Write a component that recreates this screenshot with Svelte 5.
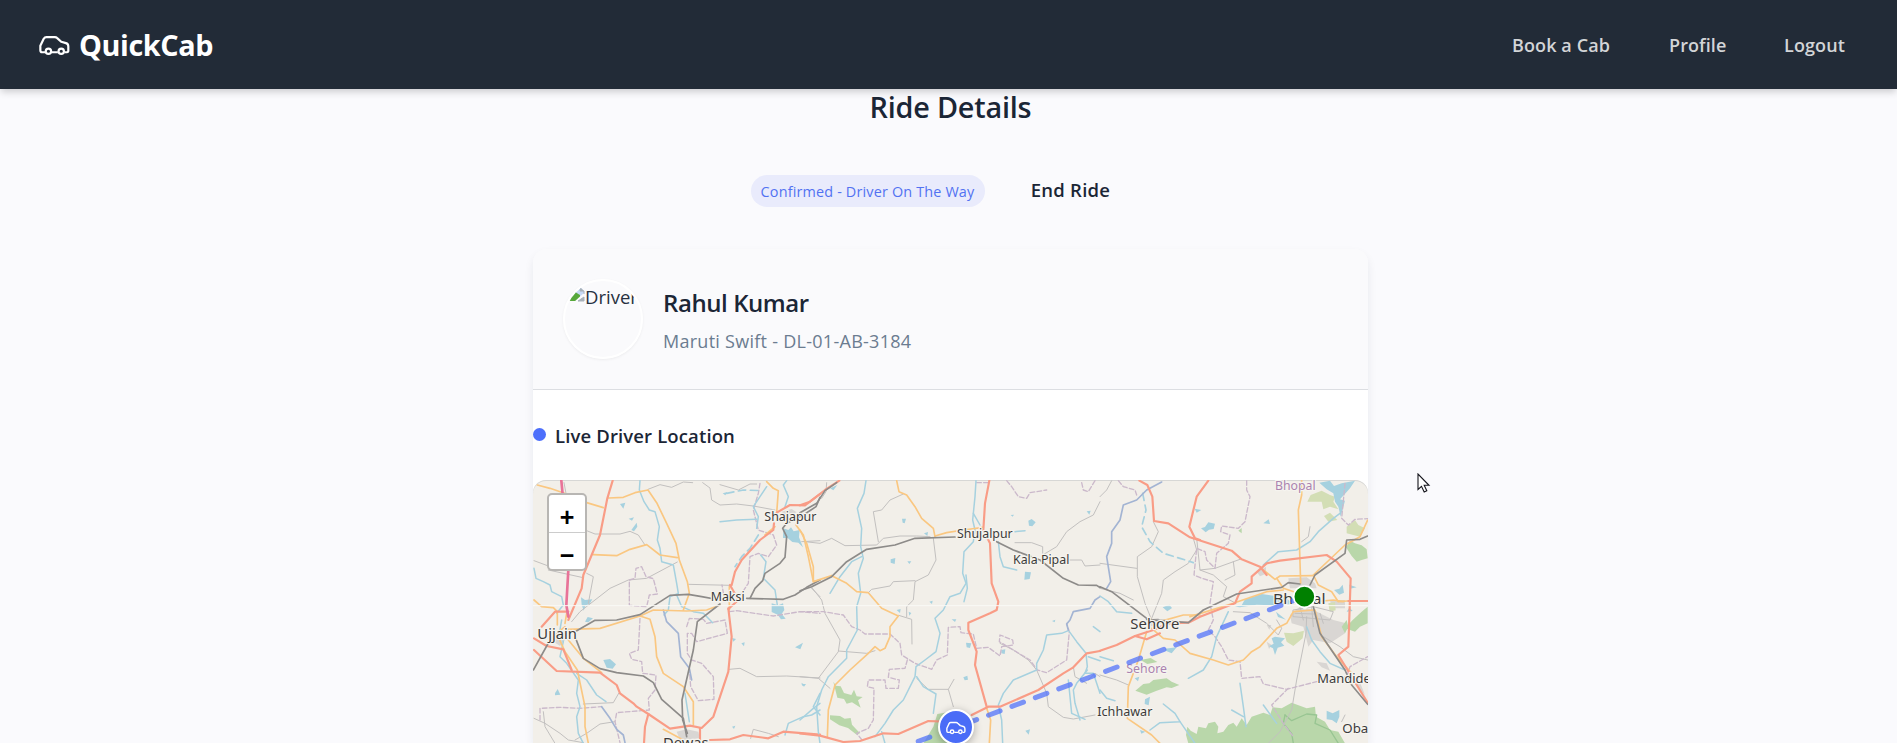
<script>
  const links = [
    { label: 'Book a Cab', width: 97 },
    { label: 'Profile', width: 55 },
    { label: 'Logout', width: 62 }
  ];

  // The map is drawn in three sheets; dx moves each one into place.
  const sheets = [
    {
      dx: -39,
      water: [
        'M790 205 l15 5 8-8 8 12 18-4-2 22 12 30-14-14-18-2-14-12-14 0z',
        'M183 412 l12 8 22-2-8 14-12 4-6 16-6-18z', 'M250 600 l20-3 18 16-10 13-18-3z',
        'M105 700 l8-13 8 17-16 2z', 'M755 430 l20 6 14-6 4 20-8 12 12 14-14 2-10-14-18-8z',
        'M300 132 l16-4-6 18zM334 210 l16-22 2 12-10 14z', 'M326 176 l16-4-6 10z',
        'M608 100 l14-4-6 10zM636 534 l12 3-8 8zM664 550 l10-3-2 12zM195 485 l8-14 16 4-14 12z',
        'M825 562 l24-14-8 20zM844 668 l10 6-6 4zM636 800 l10-3-4 10z'
      ],
      green: [],
      urban: ['M470 815 L500 808 L535 815 L540 835 L480 840z', 'M785 155 l30-8 15 10-30 14z', 'M85 535 l40-22 15 20-20 25z'],
      grey: [
        'M384 88 L420 74 L455 82 L490 66 L518 68', 'M548 68 L570 84 L575 120 L600 135 L650 132 L700 138 L765 150',
        'M600 74 L655 90 L690 72 L710 72', 'M200 212 L225 222 L300 222 L330 214 L355 225 L375 255',
        'M155 485 L180 455 L270 385 L325 360 L380 355 L472 306', 'M506 373 L630 376',
        'M628 628 L660 625 L710 650 L800 648 L900 654', 'M42 302 L85 318 M200 340 L220 350 L205 430',
        'M42 775 L75 790 L120 820 L145 840 L190 848 M165 840 L200 820 L240 792 L285 785',
        'M190 732 L280 728 L296 700', 'M692 835 L700 808 L745 820 L775 830', 'M845 245 L900 242',
        'M85 330 L185 352', 'M875 385 L900 410', 'M132 68 L138 100', 'M70 755 L75 800 L105 850'
      ],
      rail: [
        'M900 360 L860 382 L825 405 L790 418 L680 415', 'M690 415 L705 385 L728 362 L735 340 L780 310 L795 292 L800 230 L788 205 L800 190 L850 165 L888 140 L900 112',
        'M600 420 L545 410 L505 403 L450 406 L360 464 L290 480 L225 481 L165 515',
        'M90 540 L40 630', 'M165 530 L190 595 L240 626 L290 638 L370 648 L400 668 L425 718 L490 775 L500 830',
        'M600 432 L532 485 L520 570 L486 720 L488 780 L502 820'
      ],
      purple: [
        'M328 360 L345 355 L348 325 L365 320 L378 350 L400 356 L412 402 L388 405 L380 440 L328 436z',
        'M360 475 L355 570 L328 580 L335 598 L365 605 L368 640 L408 645 L405 690 L385 715 L388 750 L290 758 L285 785 L300 848',
        'M500 500 L508 475 L550 478 L560 490 L615 480 L622 520 L530 545 L515 520 L502 520 L502 580 L515 600 L545 610 L580 650 L582 718 L535 722 L512 680 L508 625',
        'M628 455 L650 452 L760 468 L840 455 L900 460', 'M720 70 L715 100 L700 150 L715 210 L760 225 L770 255 L745 290 L715 280 L690 290 L685 370 L665 400 L612 410 L606 375',
        'M60 780 L60 745 L120 742 L180 745 L245 740'
      ],
      river: [
        'M360 62 L358 90 L372 125 L388 150 L405 155 L418 200 L412 240 L420 265 L425 305 L460 315 L470 370 L475 400 L450 410 L445 450 L432 465',
        'M42 325 L48 355 L70 365 L90 375 L95 395 L125 410 L130 435 L110 460',
        'M125 480 L118 520 L130 545 L120 590 L140 610 L175 660 L170 700 L180 740 L170 770 L175 820 L190 850',
        'M170 640 L200 660 L230 705 L258 725', 'M800 62 L790 75 L805 110 L795 140',
        'M740 80 L720 110 L700 140 L715 170 L710 205', 'M600 185 L650 180 L710 178',
        'M722 285 L738 305 L730 355 L765 390 L772 435',
        'M470 405 L485 440 L520 455 L550 460 L578 488', 'M495 700 L508 785', 'M900 750 L875 765 L850 770 L805 790 L795 825', 'M900 700 L880 740 L900 765'
      ],
      stream: ['M715 225 L690 265 L665 290 L645 320', 'M620 100 L670 90 L725 92'],
      deep: ['M430 450 L440 485 L475 520 L482 590 L508 625 L515 660', 'M245 740 L270 775 L290 808 L310 825 L315 848'],
      yellow: [
        'M52 75 L90 85 L140 102 L200 128 L250 143', 'M266 114 L310 112 L345 98 L384 90 L410 128 L440 190 L468 250 L478 300 L502 365 L508 400 L490 450',
        'M220 284 L290 287 L330 268 L380 254 L420 285 L472 293', 'M42 420 L65 440 L100 443 L112 455 L112 495',
        'M145 508 L240 505 L360 468 L400 450 L500 453 L560 450 L600 435', 'M360 468 L390 478 L405 530 L410 590 L430 640 L490 680 L520 725 L520 795',
        'M135 500 L110 520 L135 575 L172 630 L195 740 L195 800 L205 850', 'M145 540 L190 595 L245 638',
        'M740 65 L760 85 L775 92 L770 160', 'M765 200 L735 225', 'M828 195 L850 225 L865 290 L880 365 L900 360',
        'M628 380 L628 450', 'M430 808 L490 840', 'M140 460 L135 490'
      ],
      red: [
        'M278 62 L262 115 L240 225 L190 345 L185 385 L145 480', 'M42 570 L110 633 L240 638 L290 675 L300 700 L340 730 L350 740 L385 762 L450 806 L510 797 L545 804 L580 770 L625 635 L635 530 L625 445',
        'M65 500 L105 455 L145 455', 'M42 535 L80 558 L130 568 L155 630', 'M385 762 L375 800 L372 850',
        'M570 840 L630 838 L670 825 L745 835 L790 815 L900 824', 'M540 805 L540 850',
        'M635 375 L645 335 L665 300 L720 240 L760 210 L762 190', 'M770 158 L810 135 L855 136 L900 102',
        'M630 375 L655 420 L625 447'
      ],
      pink: ['M124 62 L128 104 M145 330 L139 435 L145 470']
    },
    {
      dx: 801,
      water: [
        'M675 335 l18 2-4 20-16 2zM685 182 l10-5 12 10-10 12-10-2zM498 548 l16 2-4 14-10-2z',
        'M272 298 l14-4-2 18-12-4zM306 176 l12 0-4 14-6-2zM372 220 l12-4-2 12zM290 450 l12-3-2 12zM604 570 l12-2-2 14-10-2z',
        'M490 652 l12-5 2 12-10 2zM322 304 l12 0-6 8zM455 478 l14 0-4 8zM676 812 l14-4-4 16zM860 154 l12-2-4 12z',
        'M4 672 l14 0-6 8zM388 425 l10-3-2 10zM756 483 l10-4-2 8zM632 165 l10-1-4 6zM326 455 l8 4-6 8z', 'M90 85 l22-10-12 16z'
      ],
      green: [
        'M100 665 l8 12 14 2 10 20 22 6 8-16 8 20 18 2-14 10 8 22-26-16-16 4-8-14-20-4z',
        'M90 766 l30 2 14 8 18-2 4 20 24 26-10 4-26-20-26-8-28-18z', 'M412 762 l58-10-10 98-90 0 30-50z'
      ],
      grey: [
        'M310 102 L270 120 L245 150 L220 155 L235 245', 'M15 245 L60 250 L95 235 L135 257 L230 255 L250 235 L300 228 L350 228 L390 230',
        'M400 235 L408 300 L385 345 L345 365 L340 420 L320 440 L320 470', 'M345 362 L280 365 L270 378 L215 388 L205 398',
        'M296 466 L335 478 L336 552', 'M35 382 L65 420 L75 460 L120 540 L115 575 L55 655',
        'M115 573 L200 580 L225 572', 'M0 650 L55 655 L90 685', 'M645 248 L695 248 L728 260 L728 280',
        'M728 285 L770 260 L800 215 L840 185 L880 165 L900 125', 'M735 300 L845 300 L855 318 L900 315',
        'M600 550 L640 570 L685 600 L710 630 L740 700 L745 740 L790 772 L820 777 L885 765',
        'M350 655 L385 688 L445 688 L460 740', 'M445 688 L462 658', 'M820 620 L825 650 L860 670 M865 660 L885 640 L900 650',
        'M80 68 L78 95 L65 115'
      ],
      rail: [
        'M0 392 L35 380 L95 350 L140 305 L200 268 L285 255 L345 235 L465 231', 'M590 245 L640 270 L720 300 L790 355 L835 375 L890 376 L902 384',
        'M0 158 L50 130 L75 92 L110 68'
      ],
      purple: [
        'M0 455 L70 455 L130 465 L155 500 L180 510 L195 522 L270 522 L300 550 L305 585 L345 610 L395 628 L410 600 L442 585 L445 502 L480 500 L483 518 L520 522 L530 565 L565 562 L600 588 L605 560 L640 555 L638 540 L600 525 L598 545 L640 570 L690 600 L712 630 L740 638 L800 600 L808 515 L800 490',
        'M322 600 L315 625 L268 628 L265 652 L298 660 L295 685 L258 685 L255 660 L205 660 L202 680 L222 685 L220 780 L205 805 L170 820 L190 845',
        'M620 62 L635 80 L655 110 L680 115 L690 98 L740 90', 'M845 68 L850 90 L865 95 L885 62', 'M530 68 L565 68'
      ],
      river: [
        'M198 62 L192 100 L172 145 L185 205 L182 260 L190 295 L175 340 L182 400 L170 440 L172 510 L140 570 L140 595 L85 650 L65 690 L50 740 L55 815 L60 850',
        'M185 290 L155 305 L120 350 L90 400', 'M528 62 L525 110 L518 180 L525 210 L520 245 L492 275 L488 340 L498 370 L480 400 L450 410 L430 450 L405 475 L420 520 L408 575 L375 600 L348 620 L345 650 L310 720 L280 750 L255 790 L225 830',
        'M498 345 L502 385 L492 425', 'M520 160 L540 195', 'M350 650 L370 680 L408 702 L400 760', 'M595 245 L600 290 L610 320 L650 330',
        'M645 215 L675 212', 'M900 515 L880 500', 'M805 512 L785 520 L740 525 L730 570 L710 610 L710 630 L640 660 L610 700 L595 735 L605 780 L608 850',
        'M808 515 L830 545 L858 580 L862 620 L855 640 L880 640 L900 700', 'M862 630 L830 670 L820 690 L825 730 L840 780', 'M805 660 L815 760 L855 778', 'M0 780 L40 745 L60 730', 'M245 815 L255 850', 'M865 590 L900 602'
      ],
      deep: ['M900 410 L885 420 L870 445 L820 455 L810 480 L800 492 L805 510'],
      yellow: [
        'M0 210 L20 250 L40 320 L40 365 L95 347', 'M95 347 L140 370 L170 395 L205 398 L245 445 L295 468 L270 500 L270 530 L255 565 L240 572 L225 560 L205 580 L150 630 L105 675 L85 750 L82 830',
        'M290 62 L297 95 L320 105 L345 140 L365 175 L400 205 L405 230', 'M405 228 L440 218 L490 210 L550 202', 'M560 745 L572 780 L568 850'
      ],
      red: [
        'M568 62 L555 130 L550 210 L570 250 L575 370 L595 425 L590 450 L570 460 L505 488 L505 510 L530 575 L525 615 L560 740',
        'M0 820 L60 827 L130 846 L180 843 L250 820 L295 822 L385 783 L430 785', 'M515 765 L565 740 L600 740 L715 690 L790 640 L820 622 L860 580 L900 573', 'M0 136 L30 125 L75 90 L118 62'
      ],
      pink: []
    },
    {
      dx: 1701,
      water: [
        'M658 68 L690 62 L702 78 L725 70 L765 62 L750 85 L740 96 L720 118 L735 122 L722 170 L715 140 L705 125 L700 100 L680 88z', 'M303 205 l12-4 10-14 20 4-4 16-14 2-10 8z',
        'M405 440 l20-4 10-18 50-16 70 10 25 20-60 4-50-2-50 8z', 'M515 535 l10-5 30 5-12 12 10 10-20 6-8 22-6-20-12-6 14-8z',
        'M680 752 l18 8 20-10 0 20-8 20-14-10-16-2z',
        'M188 442 l20-8 8 10-14 10zM195 566 l35-4-15 18-18-8zM284 146 l20 4-14 8zM490 190 l16-12 4 14zM702 390 l16-4 10-12 4 24-14 6zM135 718 l15-8-4 26-12-4zM104 655 l14-5-4 14zM748 374 l22 8-20 4zM120 810 l16 5-12 6zM740 455 l8-12 10 10zM528 455 l12 10 18 14-24-8z'
      ],
      green: [
        'M106 692 L130 672 L148 670 L160 660 L200 655 L215 665 L238 675 L215 684 L200 682 L170 692 L140 704z', 'M122 600 l30-6 20 12-30 6z',
        'M738 262 L750 242 L765 250 L785 256 L800 268 L803 295 L785 300 L770 305 L755 288z', 'M758 480 L785 455 L803 440 L803 490 L780 500 L765 515 L735 505z',
        'M265 850 L258 825 L262 800 L272 812 L290 822 L295 800 L318 805 L325 790 L345 785 L355 800 L352 820 L370 815 L385 795 L400 788 L410 800 L425 775 L440 795 L455 770 L490 758 L510 765 L518 742 L545 745 L575 728 L620 745 L645 740 L648 770 L675 785 L690 810 L715 815 L735 850z',
        'M415 212 l10-8 0 16z', 'M725 500 l15-20 5 20-10 20z'
      ],
      olive: [
        'M622 125 L632 105 L665 92 L690 105 L705 110 L700 125 L715 148 L690 140 L670 148 L665 125z', 'M672 168 L690 158 L712 180 L685 185z', 'M740 200 L765 180 L775 195 L795 205 L780 230 L740 220z', 'M552 518 L580 520 L612 512 L608 535 L580 558 L560 545z', 'M685 430 l20-4 2 25-18 4z'
      ],
      urban: [
        'M570 465 L600 440 L640 450 L700 480 L738 490 L735 520 L690 550 L640 540 L625 560 L610 500 L575 490z', 'M565 355 L620 352 L645 370 L650 385 L570 385z', 'M650 605 l30 5 10 22-25-10z', 'M690 420 l45 0 0 25-40 0z', 'M470 335 l28-14 0 20-18 8z', 'M745 645 l30 10 20 50-20-20z', 'M500 545 l15 10-8 12z', 'M140 480 l35-6 10 16-35 10z', 'M500 495 l14 0-6 14z'
      ],
      forestline: ['M555 765 L575 782 L620 762 L650 765 L645 790 L690 810 L715 850', 'M555 765 L550 790 L575 820 L580 850'],
      grey: [
        'M35 62 L20 90 L0 110', 'M0 310 L110 325', 'M160 185 L175 215 L155 260 L112 290 L112 350 L135 430 L155 480',
        'M280 235 L290 270 L265 310 L225 335 L190 360 L185 400 L155 475', 'M290 235 L300 330 L340 345 L380 380 L370 410 L408 430', 'M300 330 L345 325 L420 298',
        'M400 305 L405 345 L375 360', 'M620 470 L618 520 L590 660 L575 750 L540 815 L505 850', 'M400 455 L450 458 L500 490 L535 525 L545 505 L530 480',
        'M670 530 L720 560 L760 590 L803 600', 'M580 450 L640 440 L700 455 L690 480 L580 470z M600 440 L610 480 M635 440 L640 500 M660 460 L670 490 M585 460 L640 462',
        'M0 645 L50 660 L85 675 M630 200 L625 230 L605 245', 'M735 765 L725 785', 'M100 420 L60 400 L0 385'
      ],
      rail: ['M0 380 L35 395 L140 475', 'M140 478 L265 488 L310 450 L410 402 L545 382 L565 368 L600 372', 'M630 375 L645 345 L735 280 L740 240 L780 238 L803 228', 'M640 440 L660 520 L735 630 L755 675 L803 733'],
      purple: [
        'M55 62 L70 80 L105 90 L110 105', 'M440 62 L440 90 L450 110 L435 185 L415 205 L365 198 L362 215 L390 225 L385 250 L350 280 L345 325 L320 300 L315 275 L290 265 L282 345 L305 355 L340 365 L330 430 L340 480 L325 510 L345 530 L365 560 L385 600 L420 605 L425 655 L480 650 L490 672 L560 688 L650 665 L740 650 L750 620 L803 590',
        'M735 70 L725 175 L745 195 L765 178 L803 176', 'M565 685 L515 735 L550 790 L580 830'
      ],
      river: [
        'M0 408 L25 425 L50 455 L95 460', 'M720 160 L700 175 L655 215 L630 245 L590 270 L535 275 L490 315', 'M385 455 L350 530 L335 590 L310 630 L265 655', 'M620 500 L635 540 L660 575 L690 610 L735 630',
        'M190 732 L225 760 L240 785 L180 788 L150 810', 'M240 785 L285 850', 'M420 670 L430 740 L438 800 M395 750 L430 770', 'M490 735 L530 790', 'M0 690 L20 715 L45 722', 'M0 590 L40 602'
      ],
      stream: ['M128 100 L138 150 L125 200 L150 245 L190 280 L240 295 L280 308'],
      deep: ['M185 66 L140 90 L110 120 L70 135 L60 180 L35 215 L35 250 L20 290 L32 365 L20 385'],
      yellow: [
        'M605 62 L605 105 L595 150 L602 370', 'M803 180 L780 230 L735 255 L640 345 L655 375 L695 395 L715 425 L742 423', 'M490 330 L525 358 L540 348 L640 347',
        'M530 355 L550 385 L595 400', 'M190 482 L250 465 L300 465', 'M270 470 L400 430 L500 395 L550 390', 'M155 505 L190 535 L225 540 L270 580 L340 600 L385 615 L430 600 L455 575 L480 560 L530 505 L560 490 L580 455 L640 450',
        'M140 515 L115 600 L85 680 L82 775 L155 825 L180 850', 'M645 450 L665 530 L710 590 L755 640', 'M650 425 L700 420 L730 425'
      ],
      red: [
        'M118 62 L142 75 L157 110 L162 183 L205 190 L270 232 L395 272 L425 298 L480 320 L500 345', 'M325 62 L290 110 L268 200 L285 235 L300 240',
        'M0 572 L50 555 L105 528 L160 510 L205 490 L265 488 L300 470 L405 430 L420 395 L455 370 L455 350 L500 310 L540 302 L680 285 L710 305 L752 355 L745 560 L715 585 L803 728',
        'M745 423 L803 423', 'M105 528 L140 538 L180 520'
      ],
      pink: []
    }
  ];

  const kinds = ['forestline', 'grey', 'purple', 'river', 'stream', 'deep', 'yellow', 'red', 'pink', 'rail'];
  const areas = ['urban', 'olive', 'green', 'water'];

  const places = [
    { name: 'Shajapur', x: 694, y: 123, w: 156, size: 37 },
    { name: 'Maksi', x: 533, y: 364, w: 102, size: 37 },
    { name: 'Ujjain', x: 13, y: 478, w: 119, size: 43 },
    { name: 'Dewas', x: 390, y: 804, w: 137, size: 43 },
    { name: 'Shujalpur', x: 1272, y: 175, w: 167, size: 37 },
    { name: 'Kala Pipal', x: 1440, y: 251, w: 169, size: 37 },
    { name: 'Sehore', x: 1792, y: 448, w: 147, size: 43 },
    { name: 'Sehore', x: 1780, y: 579, w: 122, size: 36, region: true },
    { name: 'Bhopal', x: 2226, y: 31, w: 122, size: 36, region: true },
    { name: 'Bhopal', x: 2220, y: 371, w: 158, size: 45 },
    { name: 'Ichhawar', x: 1693, y: 709, w: 165, size: 37 },
    { name: 'Mandideep', x: 2353, y: 608, w: 206, size: 37 },
    { name: 'Obaidullaganj', x: 2428, y: 759, w: 262, size: 37 }
  ];
</script>

{#snippet car()}
  <svg class="car" viewBox="118 104 92 62" aria-hidden="true">
    <path d="M136 155H127Q122 155 122 149V136L132 115Q135 110 140 110H165Q169 110 172 113L184 124L198 128Q205 130 205 138V150Q205 155 201 155H194M156 155H174" />
    <circle cx="146" cy="152" r="8" />
    <circle cx="184" cy="152" r="8" />
  </svg>
{/snippet}

<header>
  <div class="brand">{@render car()}<span>QuickCab</span></div>
  <nav>
    {#each links as link}
      <a href="#top" style:width="{link.width}px">{link.label}</a>
    {/each}
  </nav>
</header>

<main>
  <h1>Ride Details</h1>
  <div class="status">
    <span class="badge">Confirmed - Driver On The Way</span>
    <button>End Ride</button>
  </div>

  <section class="card">
    <div class="driver">
      <div class="avatar">
        <svg width="16" height="16" viewBox="0 0 16 16" aria-hidden="true">
          <path d="M1 1H11L15 5V15H1Z" fill="#c7d8f5" />
          <path d="M0 15V13L6 6L11 9V15Z" fill="#57a83b" />
          <path d="M5 16L16 6V11L11 16Z" fill="#fafafc" />
          <path d="M11 1V5H15M15 5V8M9 15H15V11Z" fill="#a9b2ba" stroke="#a9b2ba" />
        </svg><span>Driver</span>
      </div>
      <div class="who">
        <h2>Rahul Kumar</h2>
        <p>Maruti Swift - DL-01-AB-3184</p>
      </div>
    </div>

    <h3><i></i><span>Live Driver Location</span></h3>

    <div class="map">
      <svg class="tiles" viewBox="0 0 2505 789">
        {#each sheets as sheet}
          <g transform="translate({sheet.dx} -60)">
            {#each areas as area}
              {#each sheet[area] ?? [] as d}<path class={area} {d} />{/each}
            {/each}
            {#each kinds as kind}
              {#each sheet[kind] ?? [] as d}<path class="line {kind}" {d} />{/each}
            {/each}
          </g>
        {/each}
        <path class="seam" d="M0 377H2505" />
        {#each places as p}
          <text x={p.x} y={p.y} font-size={p.size} textLength={p.w} lengthAdjust="spacingAndGlyphs" class:region={p.region}>{p.name}</text>
        {/each}
        <path class="route" d="M2314 350L1270 742L1080 812" />
        <circle class="pickup" cx="2314" cy="350" r="32" />
      </svg>
      <div class="zoom"><button>+</button><button>−</button></div>
      <div class="cab">{@render car()}</div>
    </div>
  </section>
</main>

<svg class="pointer" width="14" height="21" viewBox="0 0 14 21" aria-hidden="true">
  <path d="M1 1V16.5L4.5 13.3L7.2 19L9.8 17.8L7.2 12.3H12Z" fill="#fff" stroke="#15151c" stroke-width="1.1" />
</svg>

<style>
  :global(body) {
    background: #fafafd;
    overflow: hidden;
    font-family: 'Open Sans', 'Noto Sans', sans-serif;
  }
  :global(#app) { height: 743px; overflow: hidden; }
  h1, h2, h3, p { margin: 0; }
  button { font: inherit; border: 0; background: none; padding: 0; }
  header {
    position: relative;
    z-index: 2;
    box-sizing: border-box;
    height: 89px;
    padding: 0 51px 0 39px;
    display: flex;
    align-items: center;
    justify-content: space-between;
    background: #222b37;
    box-shadow: 0 4px 7px -1px rgba(0, 0, 0, 0.18);
  }
  .car { display: block; width: 31px; height: 21px; fill: none; stroke: currentColor; stroke-width: 6.5; stroke-linejoin: round; }
  .brand { display: flex; align-items: center; gap: 9px; color: #fff; font-size: 28.8px; font-weight: 700; letter-spacing: -0.4px; }
  .brand .car { margin-top: 1px; }
  .brand span { line-height: 40px; }
  nav { display: flex; gap: 60px; }
  nav a { color: #d3d5d7; text-decoration: none; font-size: 18px; font-weight: 650; letter-spacing: 0.1px; white-space: nowrap; line-height: 26px; }
  main { display: flex; flex-direction: column; align-items: center; padding-left: 4px; color: #1b2636; }
  h1 { font-size: 28.8px; line-height: 36px; height: 38px; font-weight: 600; letter-spacing: -0.2px; white-space: nowrap; }
  .status { display: flex; align-items: center; gap: 46px; height: 32px; margin: 48px 40px 0 0; }
  .badge { box-sizing: border-box; width: 234px; height: 32px; border-radius: 16px; background: #e9ebfc; color: #5272f2; text-align: center; font-size: 14.4px; line-height: 33px; font-weight: 500; letter-spacing: 0.17px; white-space: nowrap; }
  .status button { width: 80px; color: #1b2636; font-size: 18.5px; line-height: 28px; font-weight: 600; letter-spacing: 0.25px; white-space: nowrap; margin-top: -3px; }
  .card { width: 835px; height: 494px; margin-top: 42px; background: linear-gradient(#fafafc 60px, #fff 60px); border-radius: 14px 14px 0 0; box-shadow: 0 5px 10px rgba(30, 35, 60, 0.08); overflow: hidden; }
  .driver { box-sizing: border-box; height: 141px; padding: 0 30px; border-bottom: 1px solid #dcdee2; display: flex; align-items: center; gap: 20px; background: #fafafc; }
  .avatar { box-sizing: border-box; width: 80px; height: 80px; border: 2px solid #fff; border-radius: 50%; overflow: hidden; box-shadow: 0 1px 3px rgba(0, 0, 0, 0.06); display: flex; align-items: flex-start; padding: 5px 4px; color: #27313f; }
  .avatar svg { flex: none; }
  .avatar span { flex: none; width: 51px; overflow: hidden; font-size: 18.5px; line-height: 24px; margin-top: -1px; }
  .who { padding-top: 1px; white-space: nowrap; }
  h2 { font-size: 24px; line-height: 36px; font-weight: 600; letter-spacing: -0.42px; }
  p { font-size: 18px; line-height: 28px; margin-top: 6px; color: #6b7c90; letter-spacing: 0.27px; }
  h3 { height: 90px; display: flex; align-items: center; gap: 9px; font-size: 18.5px; font-weight: 600; letter-spacing: 0.13px; white-space: nowrap; }
  h3 i { width: 13px; height: 13px; margin-top: -1px; border-radius: 50%; background: #4d6ffb; }
  h3 span { padding-top: 1px; }
  .map { position: relative; height: 263px; border-radius: 13px 13px 0 0; overflow: hidden; background: #f2efe9; box-shadow: inset 0 1px #d7d7d5; }
  .tiles { display: block; width: 835px; height: 263px; }
  .line { fill: none; stroke-linejoin: round; stroke-linecap: round; }
  .grey { stroke: #c2c0bf; stroke-width: 3; }
  .forestline { stroke: #98c592; stroke-width: 4; }
  .rail { stroke: #8d8b89; stroke-width: 5; }
  .purple { stroke: #cbb9cb; stroke-width: 4; stroke-dasharray: 14 7; }
  .river { stroke: #a6d1df; stroke-width: 4.5; }
  .stream { stroke: #a6d1df; stroke-width: 5; stroke-dasharray: 22 14; }
  .deep { stroke: #a3b4d3; stroke-width: 5; }
  .yellow { stroke: #fac781; stroke-width: 5; }
  .red { stroke: #f99c86; stroke-width: 6.5; }
  .pink { stroke: #e87398; stroke-width: 8; }
  .urban { fill: #d9d6d3; }
  .olive { fill: #d3deb5; }
  .green { fill: #b9d7aa; }
  .water { fill: #a6d1df; }
  .seam { stroke: #faf9f6; stroke-width: 3; }
  text { font-family: 'Noto Sans', sans-serif; fill: #3c3b3a; stroke: #f6f4ef; stroke-width: 7; stroke-linejoin: round; paint-order: stroke; }
  text.region { fill: #ab83b0; }
  .route { fill: none; stroke: #4d6ffb; stroke-opacity: 0.73; stroke-width: 15; stroke-linecap: round; stroke-dasharray: 37 38; }
  .pickup { fill: #008000; stroke: #fff; stroke-width: 5; }
  .zoom { position: absolute; left: 14px; top: 13px; width: 36px; height: 74px; border: 2px solid #b8b6b3; border-radius: 5px; background: #fff; }
  .zoom button { display: block; box-sizing: border-box; width: 36px; height: 38px; color: #000; font: bold 25px/45px 'Liberation Sans', sans-serif; }
  .zoom button:first-child { border-bottom: 1px solid #ccc; }
  .zoom button:last-child { height: 36px; line-height: 45px; }
  .cab { position: absolute; left: 405px; top: 229px; width: 32px; height: 32px; border: 2px solid #fff; border-radius: 50%; background: #4a6cf7; color: #fff; display: grid; place-items: center; box-shadow: 0 2px 8px rgba(0, 0, 0, 0.3); }
  .cab .car { width: 20px; height: 14px; margin-top: 2px; }
  .pointer { position: absolute; left: 1417px; top: 473px; z-index: 3; }
</style>
